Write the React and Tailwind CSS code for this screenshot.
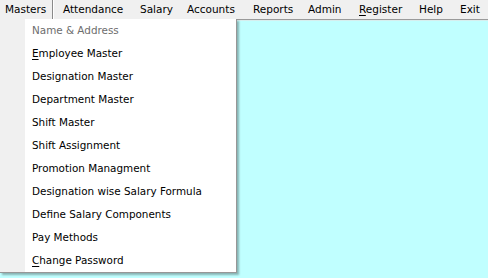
import React from "react";

const font = { fontFamily: '"DejaVu Sans", Verdana, sans-serif' };

function Label({ text, u }) {
  if (u === undefined) return <>{text}</>;
  return (
    <>
      {text.slice(0, u)}
      <span className="underline underline-offset-[2px] decoration-[1px]">{text[u]}</span>
      {text.slice(u + 1)}
    </>
  );
}

const bar = [
  { t: "Attendance", w: "w-[77px]" },
  { t: "Salary", w: "w-[47px]" },
  { t: "Accounts", w: "w-[66px]" },
  { t: "Reports", w: "w-[55px]" },
  { t: "Admin", w: "w-[51px]" },
  { t: "Register", w: "w-[60px]", u: 0 },
  { t: "Help", w: "w-[41px]" },
  { t: "Exit", w: "w-[35px]" },
];

const items = [
  { t: "Name & Address", disabled: true },
  { t: "Employee Master", u: 0 },
  { t: "Designation Master" },
  { t: "Department Master" },
  { t: "Shift Master" },
  { t: "Shift Assignment" },
  { t: "Promotion Managment" },
  { t: "Designation wise Salary Formula" },
  { t: "Define Salary Components" },
  { t: "Pay Methods" },
  { t: "Change Password", u: 0 },
];

export default function App() {
  return (
    <div className="w-[488px] h-[278px] flex flex-col bg-[#c0ffff] text-black overflow-hidden" style={font}>
      <div className="h-[19px] flex bg-[#f0f0f0] text-[10.5px] leading-[19px] shrink-0">
        <div className="w-[53px] pl-[5px] border-r border-[#8a8a8a] whitespace-nowrap">Masters</div>
        <div className="w-[1px] bg-white" />
        <div className="w-[2px]" />
        {bar.map((b) => (
          <div key={b.t} className={`${b.w} pl-[7px] whitespace-nowrap`}>
            <Label text={b.t} u={b.u} />
          </div>
        ))}
      </div>
      <div className="relative flex-1 border-t border-[#9a9a9a]">
        <div className="h-[1px] bg-[#d6eeee]" />
        <div className="absolute left-0 top-[-1px] w-[237px] flex bg-white border-r border-b border-[#979797] shadow-[2px_2px_2px_rgba(0,0,0,0.3)]">
          <div className="w-[25px] bg-[#f0f0f0] shrink-0" />
          <div className="flex flex-col flex-1 text-[10.4px]">
            {items.map((it) => (
              <div
                key={it.t}
                className={`h-[23px] leading-[23px] pl-[7px] whitespace-nowrap ${it.disabled ? "text-[#6d6d6d]" : "text-black"}`}
              >
                <Label text={it.t} u={it.u} />
              </div>
            ))}
          </div>
        </div>
      </div>
    </div>
  );
}
